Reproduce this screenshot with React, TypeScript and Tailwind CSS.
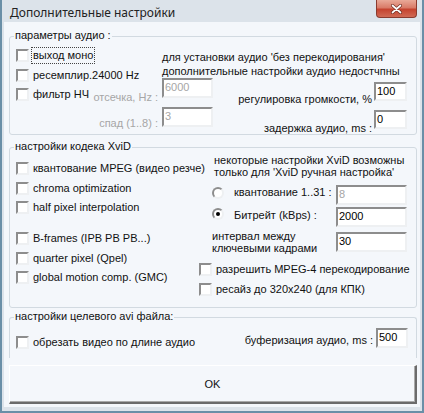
import React from "react"

const sunken =
  "border-2 border-t-[#8d8d8d] border-l-[#8d8d8d] border-r-[#eef0f2] border-b-[#eef0f2] bg-white"

function Check({ label, focus }: { label: string; focus?: boolean }) {
  return (
    <div className="flex h-[13px] items-center">
      <span className={`h-[13px] w-[13px] shrink-0 ${sunken}`} />
      <span
        className={`ml-[4px] whitespace-nowrap leading-[13px] ${
          focus ? "outline-1 outline-dotted outline-[#444] outline-offset-[1px]" : ""
        }`}
      >
        {label}
      </span>
    </div>
  )
}

function Radio({ checked, className }: { checked?: boolean; className: string }) {
  return (
    <span
      className={`flex h-[12px] w-[12px] shrink-0 items-center justify-center rounded-full border-2 border-t-[#8d8d8d] border-l-[#8d8d8d] border-r-[#eef0f2] border-b-[#eef0f2] bg-white ${className}`}
    >
      {checked && <span className="h-[4px] w-[4px] rounded-full bg-black" />}
    </span>
  )
}

function Edit({ value, className, disabled }: { value: string; className: string; disabled?: boolean }) {
  return (
    <div className={`${sunken} shrink-0 px-[1px] leading-[14px] ${disabled ? "text-[#a6a6a6]" : "text-black"} ${className}`}>
      {value}
    </div>
  )
}

function Group({ title, className, children }: { title: string; className: string; children: React.ReactNode }) {
  return (
    <div className={`relative ml-[5px] w-[408px] rounded-[3px] border border-[#d2dae1] ${className}`}>
      <span className="absolute left-[4px] top-[-8px] bg-[#f4f7fb] px-[1px] leading-[13px]">{title}</span>
      {children}
    </div>
  )
}

export default function App() {
  return (
    <div className="flex h-[413px] w-[424px] flex-col border-x-2 border-b-2 border-[#6a8fa7] bg-[#dce3ea] font-['Liberation_Sans',Arial,sans-serif] text-[11px] text-[#111]">
      {/* title bar */}
      <div className="flex h-[22px] shrink-0 items-start">
        <span className="pl-[8px] pt-[4px] font-['Noto_Sans',sans-serif] text-[12px] leading-[17px] text-[#222]">
          Дополнительные настройки
        </span>
        <div className="ml-auto mr-[5px] flex h-[18px] w-[41px] items-center justify-center rounded-b-[4px] border border-t-0 border-[#8a3b2f] bg-[linear-gradient(#e9a998,#d97b68_45%,#c5432f_55%,#d06a55)]">
          <svg width="11" height="10" viewBox="0 0 11 10">
            <path d="M1.5 1.5 L9.5 8.5 M9.5 1.5 L1.5 8.5" stroke="#6b2a20" strokeWidth="3" strokeLinecap="round" />
            <path d="M1.5 1.5 L9.5 8.5 M9.5 1.5 L1.5 8.5" stroke="#ffffff" strokeWidth="1.7" strokeLinecap="round" />
          </svg>
        </div>
      </div>

      {/* client */}
      <div className="mx-[2px] flex h-[385px] shrink-0 flex-col bg-[#f4f7fb]">
        {/* audio */}
        <Group title="параметры аудио :" className="mt-[14px] h-[99px]">
          <div className="flex items-start">
            <div className="ml-[6px] flex w-[146px] flex-col pt-[12px]">
              <Check label="выход моно" focus />
              <div className="mt-[7px]">
                <Check label="ресемплир.24000 Hz" />
              </div>
              <div className="mt-[6px] flex h-[13px] items-start">
                <Check label="фильтр НЧ" />
                <span className="ml-auto mt-[3px] pr-[4px] leading-[13px] text-[#a6a6a6]">отсечка, Hz :</span>
              </div>
              <span className="mt-[16px] self-end pr-[4px] leading-[13px] text-[#a6a6a6]">спад (1..8) :</span>
            </div>
            <div className="flex w-[245px] flex-col pt-[13px]">
              <div className="whitespace-nowrap leading-[14px]">
                <div>для установки аудио 'без перекодирования'</div>
                <div>дополнительные настройки аудио недостчпны</div>
              </div>
              <div className="flex h-[20px] items-start">
                <Edit value="6000" disabled className="h-[20px] w-[51px]" />
                <span className="ml-auto mt-[15px] leading-[13px]">регулировка громкости, %</span>
                <Edit value="100" className="ml-[2px] mt-[4px] h-[19px] w-[33px]" />
              </div>
              <div className="mt-[9px] flex h-[20px] items-start">
                <Edit value="3" disabled className="h-[20px] w-[51px]" />
                <span className="ml-auto mt-[15px] leading-[13px]">задержка аудио, ms :</span>
                <Edit value="0" className="ml-[2px] mt-[3px] h-[19px] w-[33px]" />
              </div>
            </div>
          </div>
        </Group>

        {/* xvid */}
        <Group title="настройки кодека XviD" className="mt-[12px] h-[161px]">
          <div className="flex items-start">
            <div className="ml-[6px] flex w-[183px] flex-col pt-[14px]">
              <Check label="квантование MPEG (видео резче)" />
              <div className="mt-[7px]">
                <Check label="chroma optimization" />
              </div>
              <div className="mt-[6px]">
                <Check label="half pixel interpolation" />
              </div>
              <div className="mt-[18px]">
                <Check label="B-frames (IPB PB PB...)" />
              </div>
              <div className="mt-[7px]">
                <Check label="quarter pixel (Qpel)" />
              </div>
              <div className="mt-[6px]">
                <Check label="global motion comp. (GMC)" />
              </div>
            </div>
            <div className="flex w-[208px] flex-col pt-[6px]">
              <div className="ml-[15px] whitespace-nowrap leading-[12px]">
                <div>некоторые настройки XviD возможны</div>
                <div>только для 'XviD ручная настройка'</div>
              </div>
              <div className="ml-[13px] mt-[7px] flex h-[20px] items-start">
                <Radio className="mt-[2px]" />
                <span className="ml-[10px] mt-[1px] leading-[13px]">квантование 1..31 :</span>
                <Edit value="8" disabled className="ml-auto h-[20px] w-[71px]" />
              </div>
              <div className="ml-[13px] mt-[2px] flex h-[20px] items-start">
                <Radio checked className="mt-[1px]" />
                <span className="ml-[10px] mt-[2px] leading-[13px]">Битрейт (kBps) :</span>
                <Edit value="2000" className="ml-auto h-[20px] w-[71px]" />
              </div>
              <div className="ml-[13px] mt-[5px] flex h-[20px] items-center">
                <div className="leading-[12px]">
                  <div>интервал между</div>
                  <div>ключевыми кадрами</div>
                </div>
                <Edit value="30" className="ml-auto h-[20px] w-[71px]" />
              </div>
              <div className="mt-[11px]">
                <Check label="разрешить MPEG-4 перекодирование" />
              </div>
              <div className="mt-[7px]">
                <Check label="ресайз до 320x240 (для КПК)" />
              </div>
            </div>
          </div>
        </Group>

        {/* avi */}
        <Group title="настройки целевого avi файла:" className="mt-[9px] h-[41px] rounded-b-none border-b-0">
          <div className="flex items-start pt-[10px]">
            <div className="ml-[6px] mt-[8px]">
              <Check label="обрезать видео по длине аудио" />
            </div>
            <span className="ml-auto mt-[6px] leading-[13px]">буферизация аудио, ms :</span>
            <Edit value="500" className="ml-[3px] mr-[8px] h-[20px] w-[32px]" />
          </div>
        </Group>

        <button className="ml-[5px] mt-[7px] flex h-[39px] w-[408px] shrink-0 items-center justify-center border-t border-l border-b-2 border-r-2 border-t-white border-l-white border-b-[#6b6b6b] border-r-[#6b6b6b] bg-[#f4f7fb] text-[11px] shadow-[inset_-1px_-1px_0_#a9a9a9]">
          OK
        </button>
      </div>
    </div>
  )
}
